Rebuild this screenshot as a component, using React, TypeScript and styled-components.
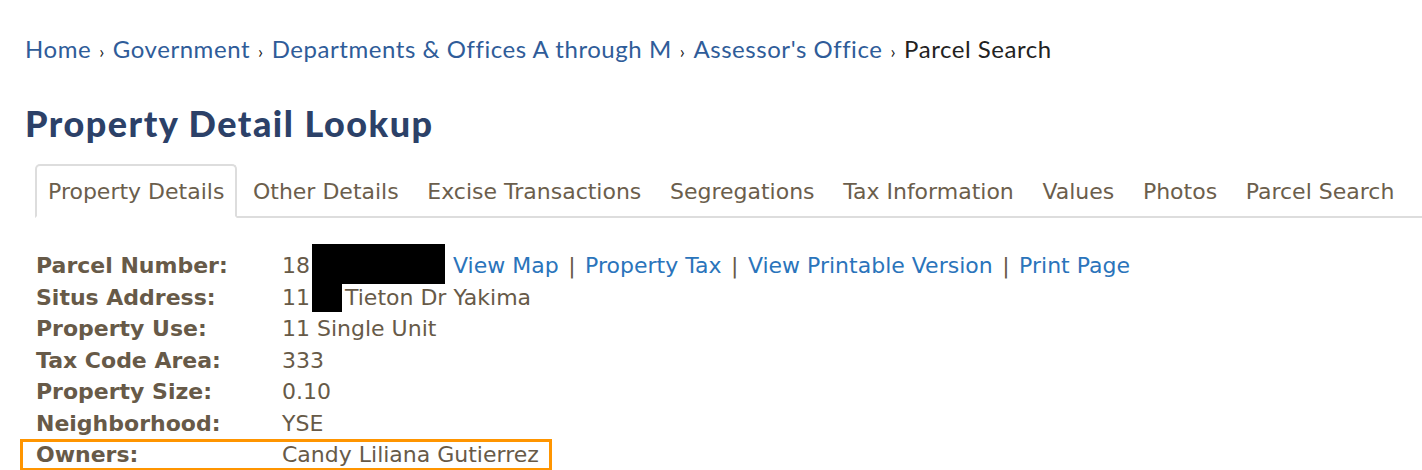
import React from "react";
import styled, { createGlobalStyle } from "styled-components";

const Global = createGlobalStyle`
  html, body { margin: 0; padding: 0; background: #fff; }
  body { font-family: "DejaVu Sans", Verdana, sans-serif; }
`;

const Page = styled.div`
  padding: 33px 0 0 25px;
`;

const Breadcrumb = styled.nav`
  font-family: "Lato", "Open Sans", sans-serif;
  font-size: 24px;
  letter-spacing: 0.55px;
  line-height: 32px;
  color: #222;
  display: flex;
  align-items: baseline;
  white-space: nowrap;
`;

const Crumb = styled.a`
  color: #2f5c99;
  text-decoration: none;
`;

const Sep = styled.span`
  color: #222;
  font-size: 18px;
  margin: 0 8px;
`;

const Current = styled.span`
  color: #222;
`;

const Title = styled.h1`
  font-family: "Lato", "Open Sans", sans-serif;
  font-weight: 900;
  font-size: 36px;
  line-height: 42px;
  color: #2c4168;
  margin: 35px 0 0 0;
  letter-spacing: 1.5px;
`;

const Tabs = styled.div`
  display: flex;
  align-items: flex-end;
  margin: 20px 0 0 10px;
  border-bottom: 2px solid #dddddd;
`;

const Tab = styled.a<{ $active?: boolean }>`
  display: flex;
  align-items: center;
  height: 54px;
  box-sizing: border-box;
  padding: 0 11px;
  margin-right: 2.6px;
  margin-bottom: -2px;
  font-size: 22px;
  color: #6b5e4c;
  white-space: nowrap;
  text-decoration: none;
  border: 2px solid ${(p) => (p.$active ? "#dddddd" : "transparent")};
  border-bottom-color: ${(p) => (p.$active ? "#fff" : "transparent")};
  border-radius: 5px 5px 0 0;
  background: ${(p) => (p.$active ? "#fff" : "transparent")};
`;

const Details = styled.div`
  display: flex;
  flex-direction: column;
  margin-top: 32px;
  margin-left: 11px;
`;

const Row = styled.div<{ $highlight?: boolean }>`
  display: grid;
  grid-template-columns: 246px auto;
  width: fit-content;
  font-size: 22px;
  line-height: 31.5px;
  color: #675a48;
  white-space: nowrap;
  ${(p) =>
    p.$highlight
      ? `
    margin-left: -16px;
    padding: 0 13px 0 16px;
    outline: 3px solid #ff9500;
    outline-offset: -3px;
  `
      : ""}
`;

const Label = styled.span`
  font-weight: bold;
`;

const Value = styled.span``;

const Redact = styled.span<{ $w: number; $h: number; $mt: number; $mb: number }>`
  display: inline-block;
  background: #000;
  width: ${(p) => p.$w}px;
  height: ${(p) => p.$h}px;
  margin-top: ${(p) => p.$mt}px;
  margin-bottom: ${(p) => p.$mb}px;
  vertical-align: top;
`;

const Link = styled.a`
  color: #2a74bb;
  text-decoration: none;
`;

const Pipe = styled.span`
  color: #675a48;
  margin: 0 9.5px;
`;

const rows: { label: string; value: React.ReactNode; highlight?: boolean }[] = [
  {
    label: "Parcel Number:",
    value: (
      <>
        18
        <Redact $w={133} $h={40} $mt={-6} $mb={-2.5} style={{ marginLeft: 2, marginRight: 8 }} />
        <Link>View Map</Link>
        <Pipe>|</Pipe>
        <Link>Property Tax</Link>
        <Pipe>|</Pipe>
        <Link>View Printable Version</Link>
        <Pipe>|</Pipe>
        <Link>Print Page</Link>
      </>
    ),
  },
  {
    label: "Situs Address:",
    value: (
      <>
        11
        <Redact $w={30} $h={28} $mt={2} $mb={-2} style={{ marginLeft: 2, marginRight: 3 }} />
        Tieton Dr Yakima
      </>
    ),
  },
  { label: "Property Use:", value: "11 Single Unit" },
  { label: "Tax Code Area:", value: "333" },
  { label: "Property Size:", value: "0.10" },
  { label: "Neighborhood:", value: "YSE" },
  { label: "Owners:", value: "Candy Liliana Gutierrez", highlight: true },
];

const tabs = [
  "Property Details",
  "Other Details",
  "Excise Transactions",
  "Segregations",
  "Tax Information",
  "Values",
  "Photos",
  "Parcel Search",
];

export default function App() {
  return (
    <>
      <Global />
      <Page>
        <Breadcrumb>
          <Crumb>Home</Crumb>
          <Sep>›</Sep>
          <Crumb>Government</Crumb>
          <Sep>›</Sep>
          <Crumb>Departments &amp; Offices A through M</Crumb>
          <Sep>›</Sep>
          <Crumb>Assessor's Office</Crumb>
          <Sep>›</Sep>
          <Current>Parcel Search</Current>
        </Breadcrumb>
        <Title>Property Detail Lookup</Title>
        <Tabs>
          {tabs.map((t, i) => (
            <Tab key={t} $active={i === 0}>
              {t}
            </Tab>
          ))}
        </Tabs>
        <Details>
          {rows.map((r) => (
            <Row key={r.label} $highlight={r.highlight}>
              <Label>{r.label}</Label>
              <Value>{r.value}</Value>
            </Row>
          ))}
        </Details>
      </Page>
    </>
  );
}
